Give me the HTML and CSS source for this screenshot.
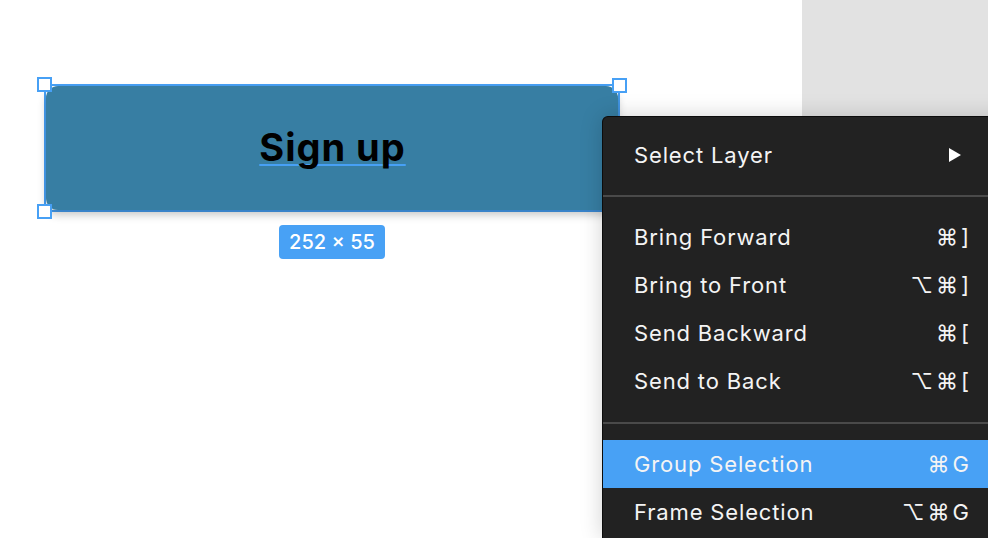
FILE: index.html
```html
<!DOCTYPE html>
<html>
<head>
<meta charset="utf-8">
<link rel="stylesheet" href="styles.css">
</head>
<body>
<div class="app">
  <div class="canvas">
    <div class="frame">
      <div class="selection">
        <div class="button"><span class="label">Sign up</span></div>
        <span class="handle tl"></span>
        <span class="handle tr"></span>
        <span class="handle bl"></span>
      </div>
      <div class="badge">252 × 55</div>
    </div>
  </div>
  <div class="sidebar"></div>
  <div class="menu">
    <div class="item"><span>Select Layer</span><svg class="arrow" width="12" height="14" viewBox="0 0 12 14"><polygon points="0,0 12,7 0,14" fill="#fff"/></svg></div>
    <div class="sep"></div>
    <div class="item"><span>Bring Forward</span><span class="keys"><span>⌘</span><span>]</span></span></div>
    <div class="item"><span>Bring to Front</span><span class="keys"><span>⌥</span><span>⌘</span><span>]</span></span></div>
    <div class="item"><span>Send Backward</span><span class="keys"><span>⌘</span><span>[</span></span></div>
    <div class="item"><span>Send to Back</span><span class="keys"><span>⌥</span><span>⌘</span><span>[</span></span></div>
    <div class="sep sep-lower"></div>
    <div class="item active"><span>Group Selection</span><span class="keys"><span>⌘</span><span>G</span></span></div>
    <div class="item"><span>Frame Selection</span><span class="keys"><span>⌥</span><span>⌘</span><span>G</span></span></div>
  </div>
</div>
</body>
</html>
```

FILE: styles.css
```css
html, body {
  margin: 0;
  padding: 0;
}
body {
  width: 988px;
  height: 538px;
  overflow: hidden;
  background: #ffffff;
  font-family: Inter, "Noto Sans", "DejaVu Sans", sans-serif;
}
.app {
  position: relative;
  display: flex;
  width: 988px;
  height: 538px;
  overflow: hidden;
}
.canvas {
  flex: 0 0 802px;
  background: #ffffff;
  padding: 84px 0 0 44px;
  box-sizing: border-box;
}
.frame {
  width: 576px;
  display: flex;
  flex-direction: column;
  align-items: center;
}
.selection {
  position: relative;
  width: 576px;
  height: 128px;
  box-sizing: border-box;
  border: 2px solid #47a0f5;
}
.button {
  height: 100%;
  border-radius: 12px;
  background: #377ea3;
  box-shadow: 0 5px 8px rgba(0, 0, 0, 0.22);
  display: flex;
  align-items: center;
  justify-content: center;
}
.label {
  font-family: Inter, "Liberation Sans", sans-serif;
  font-weight: 700;
  font-size: 38px;
  letter-spacing: 1px;
  color: #000;
  text-decoration: underline;
  text-decoration-color: #47a0f5;
  text-decoration-thickness: 2px;
  text-underline-offset: 3px;
  text-decoration-skip-ink: none;
  margin-top: -2px;
  margin-right: -1px;
}
.handle {
  position: absolute;
  width: 11px;
  height: 11px;
  background: #fff;
  border: 2px solid #47a0f5;
}
.handle.tl { left: -9px; top: -9px; }
.handle.tr { right: -9px; top: -8px; }
.handle.bl { left: -9px; bottom: -9px; }
.badge {
  margin-top: 13px;
  height: 34px;
  padding: 0 10px;
  border-radius: 4px;
  background: #48a1f5;
  color: #fff;
  font-size: 20px;
  font-weight: 500;
  display: flex;
  align-items: center;
}
.sidebar {
  flex: 1;
  background: #e2e2e2;
}
.menu {
  position: absolute;
  left: 602px;
  top: 116px;
  width: 420px;
  background: #222222;
  border: 1px solid #0c0c0c;
  border-bottom: none;
  border-radius: 6px 6px 0 0;
  box-shadow: 0 0 22px rgba(0, 0, 0, 0.18);
  padding: 14px 0 2px;
  color: #f4f4f4;
  font-size: 22px;
  letter-spacing: 0.85px;
}
.item {
  height: 48px;
  display: flex;
  align-items: center;
  justify-content: space-between;
  padding: 0 54px 0 31px;
}
.item.active {
  background: #48a1f5;
}
.arrow {
  margin-right: 8px;
}
.keys {
  display: flex;
  gap: 3px;
  letter-spacing: 0;
}
.sep {
  height: 2px;
  background: #4a4a4a;
  margin: 16px 0 16px;
}
.sep-lower {
  margin-top: 17px;
}
```
